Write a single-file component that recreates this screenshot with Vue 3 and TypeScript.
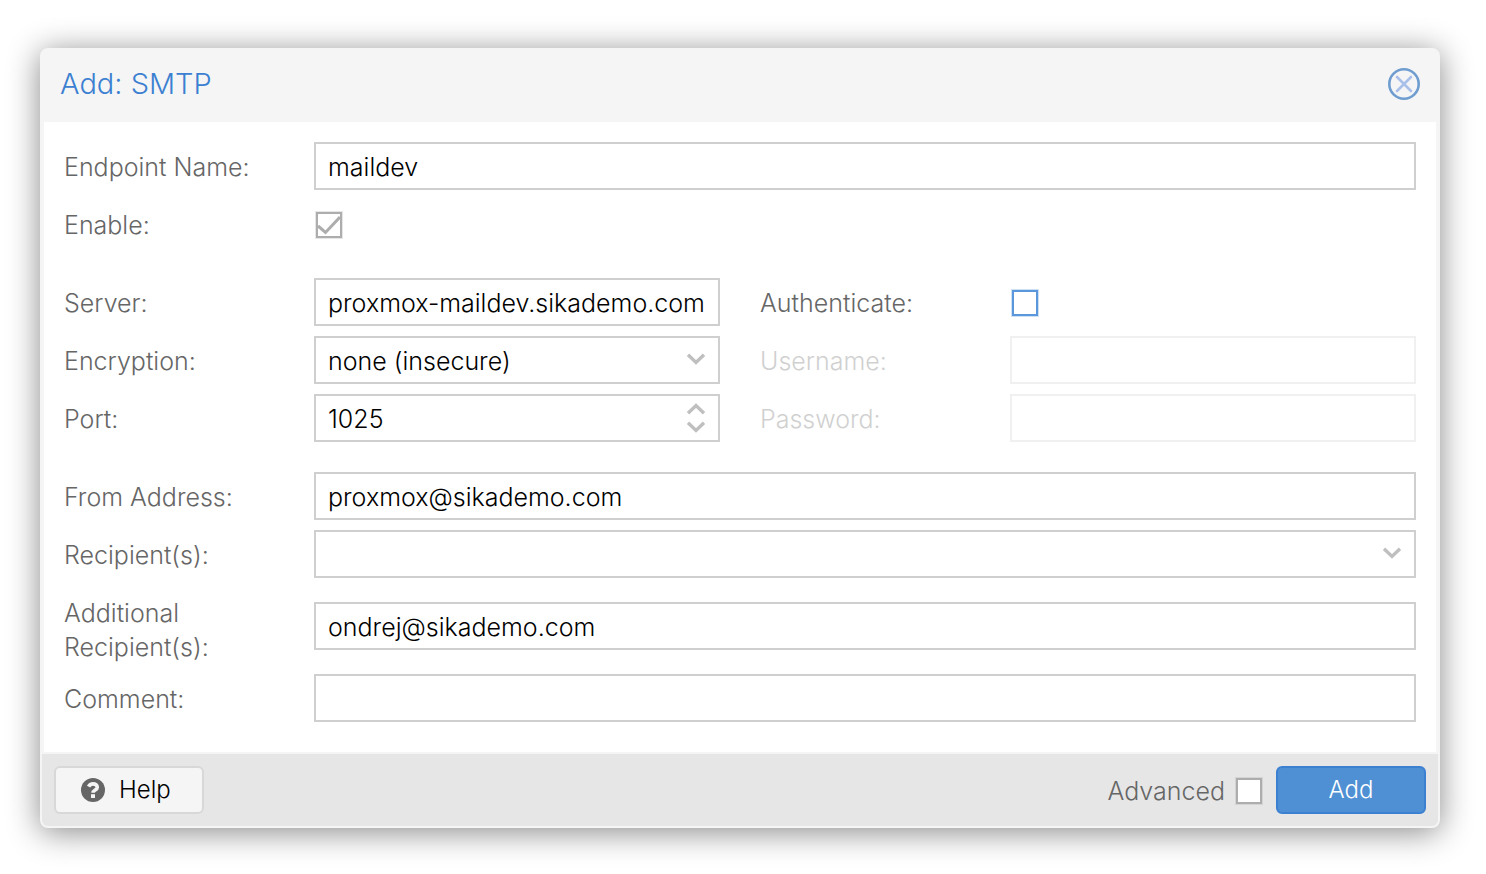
<script setup lang="ts">
import { reactive } from 'vue'

const form = reactive({
  name: 'maildev',
  enable: true,
  server: 'proxmox-maildev.sikademo.com',
  encryption: 'none (insecure)',
  port: '1025',
  authenticate: false,
  username: '',
  password: '',
  from: 'proxmox@sikademo.com',
  recipients: '',
  additional: 'ondrej@sikademo.com',
  comment: '',
  advanced: false,
})

function step(delta: number): void {
  form.port = String(Math.max(1, Number(form.port) + delta))
}
</script>

<template>
  <main class="page">
    <form class="window" role="dialog" aria-labelledby="title" @submit.prevent>
      <header class="header">
        <h1 id="title" class="title">Add: SMTP</h1>
        <button type="button" class="close" aria-label="Close">
          <svg viewBox="0 0 32 32" width="32" height="32" fill="none" aria-hidden="true">
            <circle cx="16" cy="16" r="14.700" stroke="#6f9dd0" stroke-width="2.600" />
            <path d="M9 9 23 23M23 9 9 23" stroke="#a9c1ea" stroke-width="2.600" stroke-linecap="round" />
          </svg>
        </button>
      </header>

      <div class="body">
        <div class="group">
          <div class="row">
            <label class="label" for="name">Endpoint Name:</label>
            <input id="name" v-model="form.name" class="field" type="text" />
          </div>
          <div class="row">
            <label class="label" for="enable">Enable:</label>
            <input id="enable" v-model="form.enable" class="check" type="checkbox" />
          </div>
        </div>

        <div class="columns">
          <div class="group">
            <div class="row">
              <label class="label" for="server">Server:</label>
              <input id="server" v-model="form.server" class="field" type="text" />
            </div>
            <div class="row">
              <label class="label" for="encryption">Encryption:</label>
              <div class="combo">
                <select id="encryption" v-model="form.encryption" class="field">
                  <option>none (insecure)</option>
                  <option>STARTTLS</option>
                  <option>TLS</option>
                </select>
                <svg class="arrow" viewBox="0 0 20 12" width="20" height="12" fill="none" aria-hidden="true">
                  <path d="M2 1.800 10 9.400 18 1.800" stroke="#bfbfbf" stroke-width="3.400" />
                </svg>
              </div>
            </div>
            <div class="row">
              <label class="label" for="port">Port:</label>
              <div class="combo">
                <input id="port" v-model="form.port" class="field" type="text" inputmode="numeric" />
                <div class="spinner">
                  <button type="button" class="step up" aria-label="Increase port" @click="step(1)">
                    <svg viewBox="0 0 20 12" width="20" height="12" fill="none" aria-hidden="true">
                      <path d="M2 10.200 10 2.600 18 10.200" stroke="#bfbfbf" stroke-width="3.400" />
                    </svg>
                  </button>
                  <button type="button" class="step" aria-label="Decrease port" @click="step(-1)">
                    <svg viewBox="0 0 20 12" width="20" height="12" fill="none" aria-hidden="true">
                      <path d="M2 1.800 10 9.400 18 1.800" stroke="#bfbfbf" stroke-width="3.400" />
                    </svg>
                  </button>
                </div>
              </div>
            </div>
          </div>

          <div class="group">
            <div class="row">
              <label class="label" for="auth">Authenticate:</label>
              <input id="auth" v-model="form.authenticate" class="check active" type="checkbox" />
            </div>
            <div class="row" :class="{ disabled: !form.authenticate }">
              <label class="label" for="username">Username:</label>
              <input id="username" v-model="form.username" class="field" type="text" :disabled="!form.authenticate" />
            </div>
            <div class="row" :class="{ disabled: !form.authenticate }">
              <label class="label" for="password">Password:</label>
              <input id="password" v-model="form.password" class="field" type="password" :disabled="!form.authenticate" />
            </div>
          </div>
        </div>

        <div class="group">
          <div class="row">
            <label class="label" for="from">From Address:</label>
            <input id="from" v-model="form.from" class="field" type="text" />
          </div>
          <div class="row">
            <label class="label" for="recipients">Recipient(s):</label>
            <div class="combo">
              <select id="recipients" v-model="form.recipients" class="field">
                <option value=""></option>
              </select>
              <svg class="arrow" viewBox="0 0 20 12" width="20" height="12" fill="none" aria-hidden="true">
                <path d="M2 1.800 10 9.400 18 1.800" stroke="#bfbfbf" stroke-width="3.400" />
              </svg>
            </div>
          </div>
          <div class="row">
            <label class="label" for="additional">Additional<br />Recipient(s):</label>
            <input id="additional" v-model="form.additional" class="field" type="text" />
          </div>
          <div class="row">
            <label class="label" for="comment">Comment:</label>
            <input id="comment" v-model="form.comment" class="field" type="text" />
          </div>
        </div>
      </div>

      <footer class="footer">
        <button type="button" class="button help">
          <svg viewBox="0 0 24 24" width="24" height="24" aria-hidden="true">
            <circle cx="12" cy="12" r="12" fill="#666" />
            <path d="M7.600 8.600C8.500 6.800 10 5.900 12 5.900c2.500 0 4.300 1.300 4.300 3.300 0 2.900-4.200 2.800-4.200 5.600" fill="none" stroke="#f5f5f5" stroke-width="3.600" />
            <path d="M10 16.200h4v3.800h-4z" fill="#f5f5f5" />
          </svg>
          <span>Help</span>
        </button>
        <div class="actions">
          <label class="advanced" for="advanced">Advanced</label>
          <input id="advanced" v-model="form.advanced" class="check" type="checkbox" />
          <button type="submit" class="button primary">Add</button>
        </div>
      </footer>
    </form>
  </main>
</template>

<style>
body {
  margin: 0;
  background: #fff;
}
</style>

<style scoped>
.page,
.page * {
  box-sizing: border-box;
}

.page {
  padding: 48px 46px 46px 40px;
  font-family: Inter, "Liberation Sans", sans-serif;
  font-size: 25px;
  font-weight: 300;
  line-height: 34px;
  color: #666;
}

.page button,
.page input,
.page select {
  margin: 0;
  font: inherit;
}

.window {
  border: 2px solid #f5f5f5;
  border-radius: 8px;
  background: #f5f5f5;
  box-shadow: 0 4px 32px #888;
}

.header {
  display: flex;
  align-items: center;
  justify-content: space-between;
  height: 72px;
  padding: 0 18px 4px;
}

.title {
  margin: 0;
  font-size: 29px;
  font-weight: 300;
  color: #3b80d1;
}

.close {
  display: flex;
  padding: 0;
  border: 0;
  background: none;
}

.body {
  display: flex;
  flex-direction: column;
  gap: 30px;
  margin: 0 2px 2px;
  padding: 20px 20px 30px;
  background: #fff;
}

.columns {
  display: grid;
  grid-template-columns: 1fr 1fr;
  gap: 40px;
}

.group {
  display: flex;
  flex-direction: column;
  gap: 10px;
  min-width: 0;
}

.row {
  display: flex;
  align-items: center;
  min-height: 48px;
}

.label {
  flex: 0 0 250px;
  align-self: flex-start;
  padding-top: 8px;
}

.field {
  flex: 1;
  width: 100%;
  min-width: 0;
  height: 48px;
  padding: 2px 12px 0;
  border: 2px solid #cfcfcf;
  border-radius: 0;
  background: #fff;
  color: #000;
  outline: 0;
  appearance: none;
}

.combo {
  position: relative;
  display: flex;
  flex: 1;
  min-width: 0;
}

.arrow {
  position: absolute;
  top: 17px;
  right: 14px;
  pointer-events: none;
}

.spinner {
  position: absolute;
  top: 2px;
  right: 2px;
  display: flex;
  flex-direction: column;
  width: 44px;
  height: 44px;
}

.step {
  display: flex;
  flex: 1;
  align-items: flex-start;
  justify-content: center;
  padding: 3px 0 0;
  border: 0;
  background: none;
}

.step.up {
  align-items: flex-end;
  padding: 0 0 3px;
}

.page .check {
  flex: none;
  width: 26px;
  height: 26px;
  margin: 2px 0 0 2px;
  border: 2px solid #adadad;
  border-radius: 0;
  box-shadow: 0 0 0 1px rgba(173, 173, 173, 0.3);
  background: #fff;
  appearance: none;
}

.page .check:checked {
  background: #fff url("data:image/svg+xml,%3Csvg xmlns='http://www.w3.org/2000/svg' viewBox='0 0 22 22'%3E%3Cpath d='M0 12 7.500 18.500 22 3' fill='none' stroke='%23adadad' stroke-width='3'/%3E%3C/svg%3E") center / 22px 22px no-repeat;
}

.page .check.active {
  border-color: #5a98db;
  box-shadow: 0 0 0 1px rgba(90, 152, 219, 0.3);
}

.disabled {
  opacity: 0.3;
}

.footer {
  display: flex;
  align-items: center;
  justify-content: space-between;
  height: 72px;
  padding: 0 12px;
  border-radius: 0 0 6px 6px;
  background: #e6e6e6;
}

.page .button {
  display: flex;
  align-items: center;
  justify-content: center;
  width: 150px;
  height: 48px;
  padding: 0;
  border: 2px solid #d8d8d8;
  border-radius: 6px;
  background: #f5f5f5;
  color: #000;
  font-size: 24px;
}

.page .help {
  justify-content: flex-start;
  gap: 14px;
  padding-left: 25px;
}

.page .primary {
  margin-left: 14px;
  border-color: #3b80d1;
  background: #4e90d3;
  color: #fff;
}

.actions {
  display: flex;
  align-items: center;
}

.advanced {
  margin-right: 9px;
  padding-top: 2px;
}
</style>
